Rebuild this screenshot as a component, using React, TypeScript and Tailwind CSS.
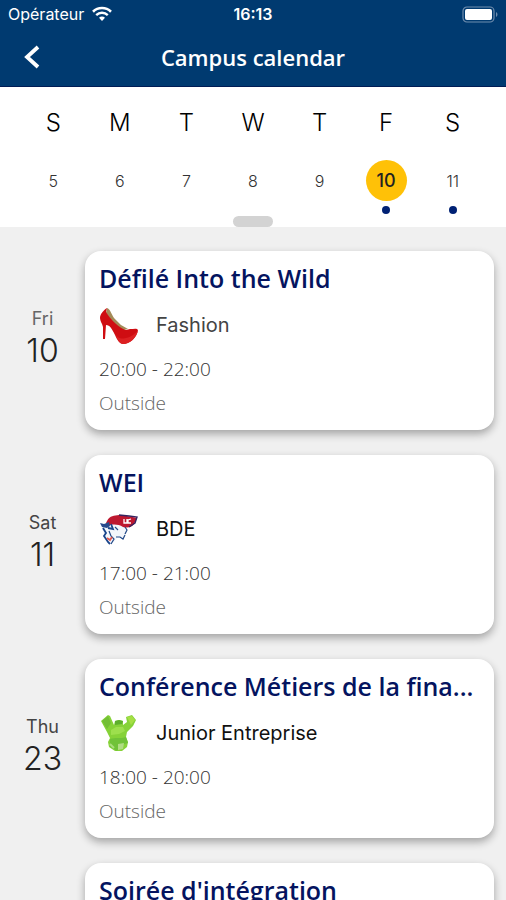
import React from "react";

type Logo = "shoe" | "pirate" | "monster";

interface CampusEvent {
  weekday: string;
  day: number;
  title: string;
  club: string;
  logo: Logo;
  time: string;
  place: string;
  muted?: boolean;
}

const week = [
  { letter: "S", day: 5 },
  { letter: "M", day: 6 },
  { letter: "T", day: 7 },
  { letter: "W", day: 8 },
  { letter: "T", day: 9 },
  { letter: "F", day: 10, selected: true, hasEvent: true },
  { letter: "S", day: 11, hasEvent: true },
];

const events: CampusEvent[] = [
  { weekday: "Fri", day: 10, title: "Défilé Into the Wild", club: "Fashion", logo: "shoe", time: "20:00 - 22:00", place: "Outside", muted: true },
  { weekday: "Sat", day: 11, title: "WEI", club: "BDE", logo: "pirate", time: "17:00 - 21:00", place: "Outside" },
  { weekday: "Thu", day: 23, title: "Conférence Métiers de la fina...", club: "Junior Entreprise", logo: "monster", time: "18:00 - 20:00", place: "Outside" },
];

function ShoeLogo() {
  return (
    <svg viewBox="0 0 40 40" className="size-10" aria-hidden="true">
      <path d="M8 3C11 4 12 8 15 13L22 20L29 24L24 25L14 18L7 8Z" fill="#a38b58" />
      <path d="M8 3C5 5 1 9 1 13C1 16 3 18 4 22L4 34L6 34L7 20C11 20 13 24 16 30C18 35 21 39 24 39C31 39 38 32 39 25C38 23 35 24 31 24L27 25C20 23 12 15 7 7Z" fill="#cf0d12" />
      <path d="M17 30C20 34 22 34 27 33C33 32 36 28 39 26C37 33 31 39 24 39C21 39 18 34 17 30Z" fill="#dc2022" />
    </svg>
  );
}

function PirateLogo() {
  return (
    <svg viewBox="0 0 40 40" className="size-10" aria-hidden="true">
      <path d="M5 16L26 13L27 25L23 30L19 28L15 33L10 35L6 28L3 19Z" fill="#f3f6fb" />
      <path d="M8 12C11 6 15 7 20 6C26 6 32 8 38 9L35 15C32 19 28 19 24 18C19 15 13 15 9 17L7 14Z" fill="#bd1830" />
      <path d="M1 14L5 15L10 13L11 17L8 19L3 18Z" fill="#274a8c" />
      <path d="M4 19L7 24L5 27L9 33L11 35M12 15L14 20L9 19" fill="none" stroke="#19458b" strokeWidth="1.8" />
      <path d="M20 6L30 7L38 8L36 14L30 18" fill="none" stroke="#37235f" strokeWidth="1.4" />
      <path d="M16 18L19 21M26 18L28 21L26 25M17 28L21 28L24 30L26 26M10 22L12 27L15 30L12 35" fill="none" stroke="#214887" strokeWidth="1.2" />
      <path d="M8 29L11 31L13 28" fill="none" stroke="#e3554b" strokeWidth="1.8" />
      <path d="M25 10L25 14L28 14L28 10M32 10L29 11L29 14L32 14" fill="none" stroke="#fff" strokeWidth="1.3" />
    </svg>
  );
}

function MonsterLogo() {
  return (
    <svg viewBox="0 0 40 40" className="size-10" aria-hidden="true">
      <path d="M2 8L9 2L11 3L15 12L16 8L20 7L24 8L24 12L28 9L27 4L33 2L37 7L34 13L28 19L27 24L29 29L28 34L23 38L16 38L10 34L9 29L11 25L8 19Z" fill="#86d238" />
      <path d="M3 8L9 3L12 10L8 16Z" fill="#73bf35" />
      <path d="M28 4L33 3L36 7L32 12Z" fill="#a5df45" />
      <path d="M16 8L20 7L24 8L23 11L16 12Z" fill="#5daf2c" />
      <path d="M12 17L17 14L24 14L26 18L20 21L12 22Z" fill="#9ddf4d" />
      <path d="M11 26C16 24 22 26 27 24L29 30L22 32L18 38L11 34Z" fill="#70c238" />
      <path d="M19 31L25 30L24 36L19 37Z" fill="#b0dc83" />
      <path d="M11 31L15 35" fill="none" stroke="#a9dd7b" strokeWidth="2" />
    </svg>
  );
}

function ClubLogo({ logo }: { logo: Logo }) {
  if (logo === "shoe") return <ShoeLogo />;
  if (logo === "pirate") return <PirateLogo />;
  return <MonsterLogo />;
}

function StatusBar() {
  return (
    <div className="grid h-7 grid-cols-3 items-center px-2 font-['Inter',sans-serif] text-base leading-6 text-white">
      <div className="flex items-center gap-2">
        <span>Opérateur</span>
        <svg viewBox="0 0 20 15" className="h-4 w-5" aria-label="Wi-Fi">
          <path d="M1 5.2C6 .3 14 .3 19 5.2" fill="none" stroke="#fff" strokeWidth="2.6" />
          <path d="M4.2 8.6C7.5 5.5 12.5 5.5 15.8 8.6" fill="none" stroke="#fff" strokeWidth="2.4" />
          <path d="M7 11.3C8.7 9.7 11.3 9.7 13 11.3L10 14.4Z" fill="#fff" />
        </svg>
      </div>
      <span className="text-center font-semibold">16:13</span>
      <svg viewBox="0 0 37 17" className="h-[17px] w-[37px] justify-self-end" aria-label="Battery">
        <rect x="2" y="1" width="31" height="15" rx="4" fill="none" stroke="#6f8dad" strokeWidth="1.2" />
        <rect x="4" y="3" width="27" height="11" rx="2" fill="#fff" />
        <path d="M35 6C37 7 37 10 35 11Z" fill="#6f8dad" />
      </svg>
    </div>
  );
}

function EventCard({ event }: { event: CampusEvent }) {
  return (
    <article className="flex">
      <div className="flex w-[85px] shrink-0 flex-col items-center justify-center pb-1 font-['Inter',sans-serif] text-[#222]">
        <span className={`text-lg leading-6 ${event.muted ? "text-[#666]" : "text-[#444]"}`}>{event.weekday}</span>
        <span className="text-[32px] leading-10 font-light">{event.day}</span>
      </div>
      <div className="min-w-0 flex-1 rounded-2xl bg-white px-[14px] pt-[10px] pb-[15px] shadow-[0_4px_8px_rgba(0,0,0,0.32)]">
        <h2 className="text-[25px] leading-[34px] font-semibold whitespace-nowrap text-[#04145f]">{event.title}</h2>
        <div className="mt-[10px] flex items-center gap-[17px]">
          <ClubLogo logo={event.logo} />
          <span className={`font-['Inter',sans-serif] text-xl leading-7 ${event.muted ? "text-[#444]" : "text-[#111]"}`}>
            {event.club}
          </span>
        </div>
        <p className="mt-3 text-[19px] leading-6 font-light text-[#333]">{event.time}</p>
        <p className="mt-[10px] text-[19px] leading-6 font-light text-[#666]">{event.place}</p>
      </div>
    </article>
  );
}

export default function App() {
  return (
    <div className="flex h-screen flex-col overflow-hidden bg-[#f0f0f0] font-['Open_Sans',sans-serif]">
      <header className="border-b border-[#001c55] bg-[#003a70]">
        <StatusBar />
        <div className="grid h-[58px] grid-cols-[64px_1fr_64px] items-center">
          <button type="button" aria-label="Back" className="flex h-full items-center pl-6">
            <svg viewBox="0 0 18 26" className="h-[26px] w-[18px]" fill="none" stroke="#fff" strokeWidth="3.8">
              <path d="M14 3L3 13L14 23" />
            </svg>
          </button>
          <h1 className="text-center text-[22px] leading-8 font-semibold text-white">Campus calendar</h1>
        </div>
      </header>

      <section className="flex h-[140px] shrink-0 flex-col items-center justify-between bg-white pt-5 font-['Inter',sans-serif]">
        <div className="grid w-full grid-cols-7 px-5">
          {week.map((d) => (
            <div key={d.day} className="flex flex-col items-center">
              <span className="text-2xl leading-8 font-light text-black">{d.letter}</span>
              <button
                type="button"
                className={`mt-[21px] flex size-[41px] items-center justify-center rounded-full ${
                  d.selected ? "bg-[#ffc107] text-lg font-medium text-[#222]" : "text-base font-light text-[#333]"
                }`}
              >
                {d.day}
              </button>
              {d.hasEvent && <span className="mt-[5px] size-2 rounded-full bg-[#002174]" />}
            </div>
          ))}
        </div>
        <div className="h-[11px] w-10 shrink-0 rounded-full bg-[#d3d3d3]" />
      </section>

      <main className="flex min-h-0 flex-1 flex-col gap-[25px] overflow-hidden pt-6 pr-3">
        {events.map((event) => (
          <EventCard key={event.title} event={event} />
        ))}
        <article className="flex">
          <div className="w-[85px] shrink-0" />
          <div className="min-w-0 flex-1 rounded-2xl bg-white px-[14px] pt-[10px] pb-[15px] shadow-[0_4px_8px_rgba(0,0,0,0.32)]">
            <h2 className="text-[25px] leading-[34px] font-semibold whitespace-nowrap text-[#04145f]">Soirée d'intégration</h2>
          </div>
        </article>
      </main>
    </div>
  );
}
